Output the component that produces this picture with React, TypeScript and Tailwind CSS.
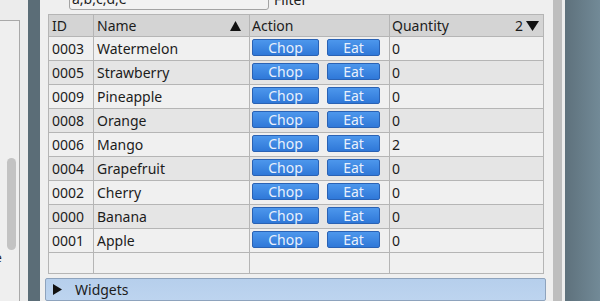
import React from "react";

const fruits = [
  { id: "0003", name: "Watermelon", qty: 0 },
  { id: "0005", name: "Strawberry", qty: 0 },
  { id: "0009", name: "Pineapple", qty: 0 },
  { id: "0008", name: "Orange", qty: 0 },
  { id: "0006", name: "Mango", qty: 2 },
  { id: "0004", name: "Grapefruit", qty: 0 },
  { id: "0002", name: "Cherry", qty: 0 },
  { id: "0000", name: "Banana", qty: 0 },
  { id: "0001", name: "Apple", qty: 0 },
];

const cols = "grid grid-cols-[45px_156px_140px_154px]";
const cell = "border-r border-b border-[#b5b5b5] flex items-center";

const BlueButton = ({ label, width }: { label: string; width: string }) => (
  <div
    className={`${width} h-[17px] rounded-[2px] border border-[#2a62b4] bg-gradient-to-b from-[#4d97ec] to-[#2f78d8] text-[#e8f0fc] text-[14px] leading-none flex items-center justify-center`}
  >
    {label}
  </div>
);

const App = () => {
  return (
    <div
      className="flex w-[600px] h-[301px] overflow-hidden bg-[#efefef] text-[#1c1c1c]"
      style={{ fontFamily: '"Noto Sans", "Open Sans", sans-serif' }}
    >
      {/* left pane */}
      <div className="w-[28px] shrink-0 bg-[#ececec]">
        <div className="mt-[20px] w-[20px] h-[281px] border-t border-r border-[#a9a9a9] bg-[#efefef] flex flex-col">
          <div className="mt-[137px] ml-[7px] w-[9px] h-[92px] rounded-full bg-[#c3c3c3]" />
          <span className="ml-[-5px] mt-[2px] text-[12px] leading-none">e</span>
        </div>
      </div>
      <div className="w-[12px] shrink-0 bg-[#5b6d77]" />

      {/* main panel */}
      <div className="w-[513px] shrink-0 flex flex-col">
        <div className="mt-[-12px] h-[22px] flex items-center pl-[29px]">
          <div className="w-[200px] h-[22px] border border-[#a3a3a3] rounded-[3px] bg-[#f2f2f2] pl-[2px] text-[14px] leading-[20px]">
            a,b,c,d,e
          </div>
          <span className="ml-[5px] text-[14px]">Filter</span>
        </div>

        <div className="mt-[4px] ml-[8px] w-[496px] border-l border-t border-[#b5b5b5] text-[14px]">
          <div className={`${cols} h-[22px] bg-[#d4d4d4]`}>
            <div className={`${cell} pl-[3px]`}>ID</div>
            <div className={`${cell} pl-[3px] justify-between pr-[8px]`}>
              <span>Name</span>
              <svg width="11" height="10" viewBox="0 0 11 10">
                <polygon points="5.5,0 11,10 0,10" fill="#111" />
              </svg>
            </div>
            <div className={`${cell} pl-[2px]`}>Action</div>
            <div className={`${cell} pl-[2px] justify-between pr-[4px]`}>
              <span>Quantity</span>
              <span className="flex items-center gap-[3px]">
                2
                <svg width="13" height="10" viewBox="0 0 13 10">
                  <polygon points="0,0 13,0 6.5,10" fill="#111" />
                </svg>
              </span>
            </div>
          </div>
          {fruits.map((f, i) => (
            <div
              key={f.id}
              className={`${cols} h-[24px] ${i % 2 === 1 ? "bg-[#e5e5e5]" : "bg-[#f0f0f0]"}`}
            >
              <div className={`${cell} pl-[3px]`}>{f.id}</div>
              <div className={`${cell} pl-[3px]`}>{f.name}</div>
              <div className={`${cell} !items-start pt-[2px] pl-[2px] gap-[8px]`}>
                <BlueButton label="Chop" width="w-[67px]" />
                <BlueButton label="Eat" width="w-[53px]" />
              </div>
              <div className={`${cell} pl-[2px]`}>{f.qty}</div>
            </div>
          ))}
          <div className={`${cols} h-[21px] bg-[#f0f0f0]`}>
            <div className={cell} />
            <div className={cell} />
            <div className={cell} />
            <div className={cell} />
          </div>
        </div>

        <div className="mt-[4px] ml-[5px] w-[501px] h-[26px] border border-[#8ea3bd] rounded-[2px] bg-gradient-to-b from-[#b6cfec] to-[#bdd4ef] flex items-center text-[14px]">
          <svg className="ml-[7px]" width="9" height="11" viewBox="0 0 9 11">
            <polygon points="0,0 9,5.5 0,11" fill="#111" />
          </svg>
          <span className="ml-[13px]">Widgets</span>
        </div>
      </div>

      {/* right edge */}
      <div className="w-[9px] shrink-0 bg-[#bebebe]" />
      <div className="w-[3px] shrink-0 bg-[#ededed]" />
      <div className="flex-1 bg-gradient-to-r from-[#5e717c] to-[#728a97]" />
    </div>
  );
};

export default App;
